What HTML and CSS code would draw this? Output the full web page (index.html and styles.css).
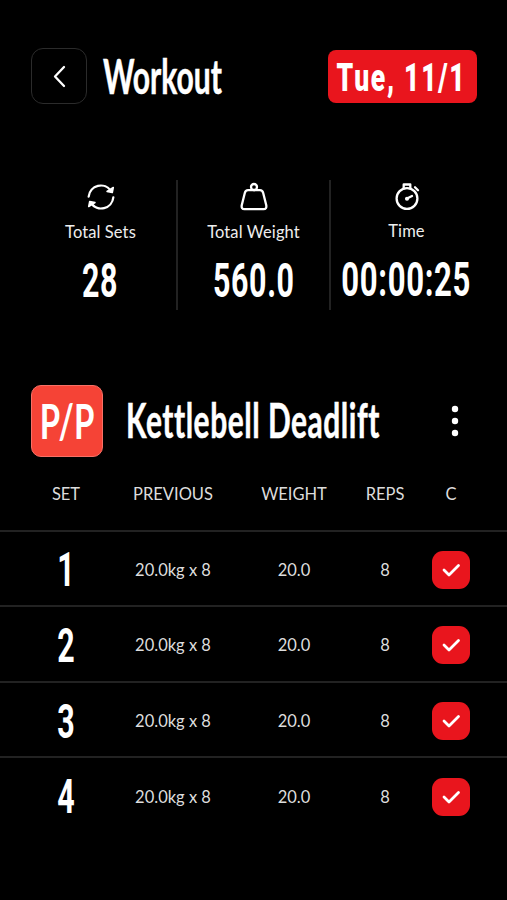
FILE: index.html
```html
<!DOCTYPE html>
<html lang="en">
<head>
<meta charset="utf-8">
<title>Workout</title>
<link rel="stylesheet" href="styles.css">
</head>
<body>
<header class="top">
  <button class="back" aria-label="Back"><svg width="56" height="56" viewBox="0 0 56 56"><path d="M33 19 24 28.500l9 9.500"/></svg></button>
  <h1 class="title"><span class="cond">Workout</span></h1>
  <div class="date"><span class="cond">Tue, 11/1</span></div>
</header>
<section class="stats">
  <div class="stat">
    <svg class="icon" width="30" height="30" viewBox="0 0 30 30"><path d="M2.700 14.500A12.200 12.200 0 0 1 25 9M27.300 15.500A12.200 12.200 0 0 1 5 21"/><path class="tip" d="M27.300 5.500 26.300 10.500 21 9.500ZM2.700 24.500 3.700 19.500 9 20.500Z"/></svg>
    <span class="label">Total Sets</span>
    <span class="value v-sets"><span class="cond">28</span></span>
  </div>
  <div class="stat">
    <svg class="icon" width="30" height="30" viewBox="0 0 30 30"><circle cx="15" cy="5" r="3"/><path d="M9 8.200H21Q23.500 8.200 24.200 11L27.200 23Q28 27.200 24.500 27.200H5.500Q2 27.200 2.800 23L5.800 11Q6.500 8.200 9 8.200Z"/></svg>
    <span class="label">Total Weight</span>
    <span class="value v-weight"><span class="cond">560.0</span></span>
  </div>
  <div class="stat">
    <svg class="icon" width="30" height="30" viewBox="0 0 30 30"><circle cx="14" cy="16.500" r="10.400"/><path d="M10.700 6.500V2.500H17.300V6.500M22 5.300 25 8.300M14 16.500l5-2.500"/><circle class="hub" cx="14" cy="16.700" r="1.300"/></svg>
    <span class="label">Time</span>
    <span class="value v-time"><span class="cond">00:00:25</span></span>
  </div>
</section>
<section class="exercise">
  <div class="badge"><span class="cond">P/P</span></div>
  <h2 class="name"><span class="cond">Kettlebell Deadlift</span></h2>
  <button class="more" aria-label="More"><svg width="10" height="34" viewBox="0 0 10 34"><circle cx="5" cy="5" r="3.200"/><circle cx="5" cy="17" r="3.200"/><circle cx="5" cy="29" r="3.200"/></svg></button>
</section>
<main class="sets">
  <div class="row head"><span>SET</span><span class="h-prev">PREVIOUS</span><span>WEIGHT</span><span>REPS</span><span>C</span></div>
  <div class="row"><span class="num"><span class="cond">1</span></span><span>20.0kg x 8</span><span>20.0</span><span>8</span><i class="check"><svg width="38" height="38" viewBox="0 0 38 38"><path d="m12 19 5 5 9.500-9.500"/></svg></i></div>
  <div class="row"><span class="num"><span class="cond">2</span></span><span>20.0kg x 8</span><span>20.0</span><span>8</span><i class="check"><svg width="38" height="38" viewBox="0 0 38 38"><path d="m12 19 5 5 9.500-9.500"/></svg></i></div>
  <div class="row"><span class="num"><span class="cond">3</span></span><span>20.0kg x 8</span><span>20.0</span><span>8</span><i class="check"><svg width="38" height="38" viewBox="0 0 38 38"><path d="m12 19 5 5 9.500-9.500"/></svg></i></div>
  <div class="row"><span class="num"><span class="cond">4</span></span><span>20.0kg x 8</span><span>20.0</span><span>8</span><i class="check"><svg width="38" height="38" viewBox="0 0 38 38"><path d="m12 19 5 5 9.500-9.500"/></svg></i></div>
</main>
</body>
</html>
```
FILE: styles.css
```css
* { box-sizing: border-box; }
body {
  margin: 0;
  height: 900px;
  overflow: hidden;
  background: #000;
  color: #fff;
  font-family: Lato, "Liberation Sans", sans-serif;
}
h1, h2 { margin: 0; }
button { padding: 0; border: 0; background: none; color: inherit; }
svg { display: block; fill: none; stroke: #fff; stroke-width: 2.3; stroke-linecap: round; stroke-linejoin: round; }
.cond { display: block; flex: none; white-space: nowrap; font-weight: 700; line-height: 1; }

.top { display: flex; align-items: center; height: 56px; margin: 48px 30px 0 31px; }
.back { width: 56px; height: 56px; border: 1.500px solid #2b2b2b; border-radius: 12px; }
.back svg { margin: -1px; }
.title { flex: 1; width: 0; margin-left: 16px; padding-top: 1px; font-size: 47px; }
.title .cond { -webkit-text-stroke: .5px #fff; transform: scaleX(.64); transform-origin: left; }
.date { display: flex; justify-content: center; align-items: center; width: 149px; height: 53px; padding: 4px 2px 0 0; border-radius: 8px; background: #e9151d; font-family: Roboto, "Liberation Sans", sans-serif; font-size: 39px; }
.date .cond { font-weight: 900; letter-spacing: 2.500px; transform: scaleX(.68); }

.stats { display: grid; grid-template-columns: 153px 153px 153px; margin: 76px 0 0 24px; }
.stat { display: flex; flex-direction: column; align-items: center; width: 154px; height: 130px; border-right: 2px solid #222; }
.stat:last-child { border-right: 0; }
.icon { margin: 2px 0 0 1px; }
.tip, .hub { fill: #fff; stroke-width: 1.5; }
.label { margin: 9px 0 0 1px; font-size: 16.500px; line-height: 22px; color: #eee; letter-spacing: .1px; }
.stat:last-child .label { margin: 8px 0 1px -1px; }
.value { display: flex; justify-content: center; width: 150px; margin: 13px 0 0 1px; font-family: Roboto, "Liberation Sans", sans-serif; font-size: 49px; }
.value .cond { letter-spacing: 1px; transform: scaleX(.62); }
.v-time .cond { transform: scaleX(.635); }
.v-time { margin: 12px 0 0 -1px; }

.exercise { display: flex; align-items: center; height: 72px; margin: 75px 47px 0 31px; }
.badge { display: flex; justify-content: center; align-items: center; width: 72px; height: 72px; border-radius: 10px; background: #f54336; border: 1px solid #f87066; font-size: 47px; }
.badge .cond { transform: scaleX(.7); }
.name { flex: 1; width: 0; margin-left: 23px; font-size: 47px; }
.name .cond { margin-top: -2px; letter-spacing: .8px; -webkit-text-stroke: .5px #fff; transform: scaleX(.638); transform-origin: left; }
.more svg { fill: #fff; stroke: none; }

.sets { margin-top: 18px; font-size: 16.500px; color: #ddd; }
.row { display: grid; grid-template-columns: 84px 130px 112px 70px 62px; align-items: center; justify-items: center; height: 75.600px; padding: 3px 0 0 24px; border-top: 2px solid #222; }
.row.head { height: 54.600px; padding: 0 0 17px 24px; border-top: 0; }
.num { display: flex; justify-content: center; color: #fff; font-family: Roboto, "Liberation Sans", sans-serif; font-size: 49px; }
.num .cond { transform: scaleX(.62); }
.check { width: 38px; height: 38px; border-radius: 11px; background: #e9151d; }
.check svg { stroke-width: 2.800; }
```
